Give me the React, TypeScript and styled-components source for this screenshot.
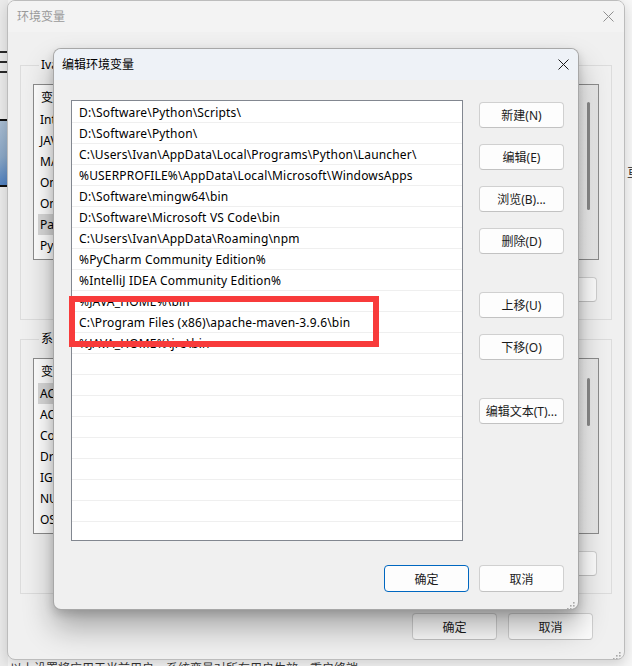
import React from "react";
import styled, { createGlobalStyle } from "styled-components";

const FONT = `"Noto Sans", "Noto Sans CJK SC", sans-serif`;

const GlobalStyle = createGlobalStyle`
  html, body { margin: 0; padding: 0; background: #f4f4f4; }
  body { font-family: ${FONT}; font-size: 12px; color: #000; }
  * { box-sizing: border-box; }
`;

const Desktop = styled.div`
  position: relative;
  width: 632px;
  height: 666px;
  overflow: hidden;
  background: #f6f6f6;
`;

/* ---------- backdrop peeks ---------- */
const LeftPeek = styled.div`
  position: absolute;
  left: 0;
  top: 0;
  width: 8px;
  height: 666px;
  background: #ebebeb;
  display: flex;
  flex-direction: column;
  padding-top: 51px;
`;
const MenuLine = styled.div`
  height: 2px;
  background: #2a2a2a;
  margin-bottom: 8px;
`;
const PeekImage = styled.div`
  margin-top: 38px;
  height: 68px;
  border-top: 2px solid #111;
  border-bottom: 2px solid #111;
  background: linear-gradient(160deg, #a9bdd2 0%, #8aa7c6 55%, #4d7fc0 100%);
`;
const RightPeek = styled.div`
  position: absolute;
  left: 624px;
  top: 0;
  width: 8px;
  height: 666px;
  background: #f7f7f7;
  overflow: hidden;
  display: flex;
  flex-direction: column;
  padding-top: 163px;
  font-size: 12px;
  color: #222;
`;
const PeekGlyph = styled.span`
  margin-left: 3px;
  white-space: nowrap;
`;
const BottomPeek = styled.div`
  position: absolute;
  left: 10px;
  top: 659px;
  font-size: 12px;
  color: #333;
  white-space: nowrap;
`;

/* ---------- common window parts ---------- */
const TitleText = styled.span`
  padding-bottom: 2px;
  white-space: nowrap;
`;
const CloseBtn = styled.div<{ $w: number }>`
  width: ${(p) => p.$w}px;
  height: 100%;
  display: flex;
  align-items: center;
  justify-content: center;
  margin-left: auto;
`;

const CloseIcon = ({ color }: { color: string }) => (
  <svg width="11" height="11" viewBox="0 0 11 11">
    <path d="M0.5 0.5 L10.5 10.5 M10.5 0.5 L0.5 10.5" stroke={color} strokeWidth="1" fill="none" />
  </svg>
);

const Grip = styled.div`
  position: absolute;
  right: 3px;
  bottom: 3px;
  width: 9px;
  height: 9px;
`;
const GripIcon = () => (
  <svg width="9" height="9" viewBox="0 0 9 9">
    {[
      [7, 1],
      [4, 4],
      [7, 4],
      [1, 7],
      [4, 7],
      [7, 7],
    ].map(([x, y], i) => (
      <rect key={i} x={x} y={y} width="1.6" height="1.6" fill="#a8a8a8" />
    ))}
  </svg>
);

const Button = styled.button<{ $primary?: boolean; $h?: number }>`
  width: 85px;
  height: ${(p) => p.$h ?? 26}px;
  flex: none;
  border-radius: 4px;
  background: #fdfdfd;
  border: 1px solid ${(p) => (p.$primary ? "#0067c0" : "#d0d0d0")};
  border-bottom-color: ${(p) => (p.$primary ? "#0067c0" : "#c2c2c2")};
  font-family: ${FONT};
  font-size: 12px;
  color: #1b1b1b;
  padding: 0;
  white-space: nowrap;
`;

/* ---------- outer (inactive) window ---------- */
const OuterWindow = styled.div`
  position: absolute;
  left: 7px;
  top: 0;
  width: 618px;
  height: 660px;
  background: #f0f0f0;
  border: 1px solid #bcbcbc;
  border-radius: 8px;
  overflow: hidden;
  box-shadow: 0 4px 14px rgba(0, 0, 0, 0.16);
  display: flex;
  flex-direction: column;
`;
const OuterTitleBar = styled.div`
  height: 31px;
  flex: none;
  background: #f3f3f3;
  display: flex;
  align-items: center;
  padding-left: 9px;
  color: #9a9a9a;
`;
const OuterBody = styled.div`
  flex: 1;
  display: flex;
  flex-direction: column;
  padding: 25px 12px 0 12px;
`;
const Group = styled.fieldset<{ $mt?: number }>`
  margin: ${(p) => p.$mt ?? 0}px 0 0 0;
  padding: 11px 12px 17px 12px;
  border: 1px solid #dcdcdc;
  min-width: 0;
  display: flex;
  flex-direction: column;
`;
const Legend = styled.legend`
  font-size: 12px;
  padding: 0 2px;
  margin-left: 6px;
  line-height: 16px;
`;
const VarList = styled.div`
  height: 176px;
  border: 1px solid #8c8c8c;
  background: #fff;
  display: flex;
  overflow: hidden;
`;
const VarTable = styled.div`
  flex: 1;
  display: flex;
  flex-direction: column;
  padding: 0 4px;
`;
const VarHeader = styled.div`
  height: 24px;
  flex: none;
  display: flex;
  align-items: center;
  padding-left: 3px;
  gap: 120px;
`;
const VarRow = styled.div<{ $sel?: boolean }>`
  height: 21px;
  flex: none;
  display: flex;
  align-items: center;
  padding-left: 2px;
  background: ${(p) => (p.$sel ? "#d9d9d9" : "transparent")};
  white-space: nowrap;
`;
const ScrollTrack = styled.div<{ $top: number; $len: number }>`
  width: 20px;
  flex: none;
  border-left: 1px solid #ececec;
  background: linear-gradient(90deg, #f4f4f4, #e6e6e6);
  display: flex;
  justify-content: center;
  padding-top: ${(p) => p.$top}px;

  &::after {
    content: "";
    width: 3px;
    height: ${(p) => p.$len}px;
    border-radius: 2px;
    background: #8a8a8a;
  }
`;
const GroupButtons = styled.div`
  display: flex;
  justify-content: flex-end;
  gap: 10px;
  margin-top: 17px;
  margin-right: 2px;
`;
const OuterFooter = styled.div`
  display: flex;
  justify-content: flex-end;
  gap: 11px;
  margin: 19px 19px 0 0;
`;

/* ---------- main (active) window ---------- */
const MainWindow = styled.div`
  position: absolute;
  left: 53px;
  top: 48px;
  width: 526px;
  height: 562px;
  background: #f0f0f0;
  border: 1px solid rgba(0, 0, 0, 0.3);
  border-radius: 8px;
  overflow: hidden;
  box-shadow: 0 18px 30px rgba(0, 0, 0, 0.3), 0 4px 10px rgba(0, 0, 0, 0.16);
  display: flex;
  flex-direction: column;
`;
const MainTitleBar = styled.div`
  height: 31px;
  flex: none;
  background: #eef2f7;
  display: flex;
  align-items: center;
  padding-left: 8px;
  color: #000;
`;
const MainBody = styled.div`
  flex: 1;
  display: grid;
  grid-template-columns: 392px 85px;
  grid-template-rows: 441px auto;
  column-gap: 16px;
  padding: 20px 14px 17px 17px;
`;
const PathList = styled.div`
  border: 1px solid #828790;
  background: #fff;
  display: flex;
  flex-direction: column;
  overflow: hidden;
  padding-top: 1px;
`;
const PathRow = styled.div`
  height: 21px;
  flex: none;
  border-bottom: 1px solid #efefef;
  padding-left: 7px;
  line-height: 21px;
  letter-spacing: 0.17px;
  white-space: nowrap;
  color: #000;
`;
const SideButtons = styled.div`
  display: flex;
  flex-direction: column;
  gap: 16px;
  padding-top: 2px;
`;
const SideButton = styled(Button)<{ $sep?: boolean }>`
  margin-top: ${(p) => (p.$sep ? 22 : 0)}px;
`;
const Footer = styled.div`
  grid-column: 1 / -1;
  display: flex;
  justify-content: flex-end;
  gap: 10px;
  margin-top: 24px;
`;

/* ---------- annotation ---------- */
const Highlight = styled.div`
  position: absolute;
  left: 69px;
  top: 296px;
  width: 310px;
  height: 51px;
  border: 6px solid #f83b3b;
`;

const paths = [
  "D:\\Software\\Python\\Scripts\\",
  "D:\\Software\\Python\\",
  "C:\\Users\\Ivan\\AppData\\Local\\Programs\\Python\\Launcher\\",
  "%USERPROFILE%\\AppData\\Local\\Microsoft\\WindowsApps",
  "D:\\Software\\mingw64\\bin",
  "D:\\Software\\Microsoft VS Code\\bin",
  "C:\\Users\\Ivan\\AppData\\Roaming\\npm",
  "%PyCharm Community Edition%",
  "%IntelliJ IDEA Community Edition%",
  "%JAVA_HOME%\\bin",
  "C:\\Program Files (x86)\\apache-maven-3.9.6\\bin",
  "%JAVA_HOME%\\jre\\bin",
];
const rows = [...paths, ...Array(9).fill("")];

const userVars = [
  "IntelliJ IDEA Community Edition",
  "JAVA_HOME",
  "MAVEN_HOME",
  "OneDrive",
  "OneDriveConsumer",
  "Path",
  "PyCharm Community Edition",
];
const sysVars = ["ACSetupSvcPort", "ACSvcPort", "ComSpec", "DriverData", "IGCCSVC_DB", "NUMBER_OF_PROCESSORS", "OS"];

const VarBox = ({ items, sel, top, len }: { items: string[]; sel: number; top: number; len: number }) => (
  <VarList>
    <VarTable>
      <VarHeader>
        <span>变量</span>
        <span>值</span>
      </VarHeader>
      {items.map((v, i) => (
        <VarRow key={v} $sel={i === sel}>
          {v}
        </VarRow>
      ))}
    </VarTable>
    <ScrollTrack $top={top} $len={len} />
  </VarList>
);

export default function App() {
  return (
    <>
      <GlobalStyle />
      <Desktop>
        <LeftPeek>
          <MenuLine />
          <MenuLine />
          <MenuLine />
          <PeekImage />
        </LeftPeek>
        <RightPeek>
          <PeekGlyph>亘</PeekGlyph>
        </RightPeek>
        <BottomPeek>以上设置将应用于当前用户，系统变量对所有用户生效，重启终端</BottomPeek>

        <OuterWindow>
          <OuterTitleBar>
            <TitleText>环境变量</TitleText>
            <CloseBtn $w={32}>
              <CloseIcon color="#8f8f8f" />
            </CloseBtn>
          </OuterTitleBar>
          <OuterBody>
            <Group>
              <Legend>Ivan 的用户变量(U)</Legend>
              <VarBox items={userVars} sel={5} top={17} len={108} />
              <GroupButtons>
                <Button $h={25}>新建(N)...</Button>
                <Button $h={25}>编辑(E)...</Button>
                <Button $h={25}>删除(D)</Button>
              </GroupButtons>
            </Group>
            <Group $mt={11}>
              <Legend>系统变量(S)</Legend>
              <VarBox items={sysVars} sel={0} top={19} len={48} />
              <GroupButtons>
                <Button $h={25}>新建(W)...</Button>
                <Button $h={25}>编辑(I)...</Button>
                <Button $h={25}>删除(L)</Button>
              </GroupButtons>
            </Group>
            <OuterFooter>
              <Button $h={27}>确定</Button>
              <Button $h={27}>取消</Button>
            </OuterFooter>
          </OuterBody>
          <Grip>
            <GripIcon />
          </Grip>
        </OuterWindow>

        <MainWindow>
          <MainTitleBar>
            <TitleText>编辑环境变量</TitleText>
            <CloseBtn $w={30}>
              <CloseIcon color="#1a1a1a" />
            </CloseBtn>
          </MainTitleBar>
          <MainBody>
            <PathList>
              {rows.map((p, i) => (
                <PathRow key={i}>{p}</PathRow>
              ))}
            </PathList>
            <SideButtons>
              <SideButton>新建(N)</SideButton>
              <SideButton>编辑(E)</SideButton>
              <SideButton>浏览(B)...</SideButton>
              <SideButton>删除(D)</SideButton>
              <SideButton $sep>上移(U)</SideButton>
              <SideButton>下移(O)</SideButton>
              <SideButton $sep>编辑文本(T)...</SideButton>
            </SideButtons>
            <Footer>
              <Button $primary $h={27}>
                确定
              </Button>
              <Button $h={27}>取消</Button>
            </Footer>
          </MainBody>
          <Grip>
            <GripIcon />
          </Grip>
        </MainWindow>

        <Highlight />
      </Desktop>
    </>
  );
}
